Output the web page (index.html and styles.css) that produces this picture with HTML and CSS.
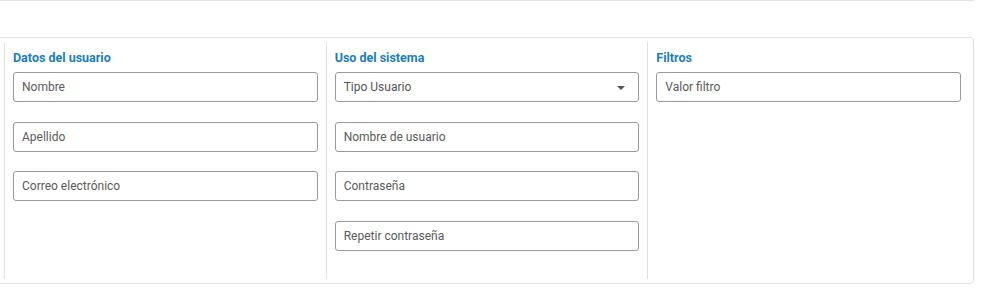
FILE: index.html
```html
<!DOCTYPE html>
<html lang="es">
<head>
    <meta charset="UTF-8">
    <meta name="viewport" content="width=device-width, initial-scale=1.0">
    <title>Usuario</title>
    <link rel="stylesheet" href="styles.css">
</head>
<body>
    <div class="top-rule"></div>

    <div class="card">
        <div class="column">
            <h3>Datos del usuario</h3>
            <input type="text" placeholder="Nombre">
            <input type="text" placeholder="Apellido">
            <input type="text" placeholder="Correo electrónico">
        </div>

        <div class="column">
            <h3>Uso del sistema</h3>
            <div class="select">
                <span>Tipo Usuario</span>
                <span class="caret"></span>
            </div>
            <input type="text" placeholder="Nombre de usuario">
            <input type="password" placeholder="Contraseña">
            <input type="password" placeholder="Repetir contraseña">
        </div>

        <div class="column">
            <h3>Filtros</h3>
            <input type="text" placeholder="Valor filtro">
        </div>
    </div>
</body>
</html>
```

FILE: styles.css
```css
body {
    margin: 0;
    font-family: Roboto, 'Liberation Sans', Arial, sans-serif;
    background-color: #ffffff;
    color: #555555;
}
.top-rule {
    width: 974px;
    border-top: 1px solid #e3e3e3;
    margin-bottom: 36px;
}
.card {
    display: flex;
    width: 965px;
    height: 237px;
    margin-left: -1px;
    padding: 4px;
    border: 1px solid #e0e0e0;
    border-radius: 0 4px 4px 0;
}
.column {
    flex: 1;
    padding: 0 8px;
    border-left: 1px solid #e0e0e0;
}
h3 {
    margin: 8px 0 6px 0;
    font-size: 12.5px;
    line-height: 16px;
    font-weight: bold;
    color: #1a7dc0;
}
input, .select {
    display: flex;
    align-items: center;
    box-sizing: border-box;
    width: 100%;
    height: 30px;
    margin: 0 0 19.6px 0;
    padding: 0 8px;
    border: 1px solid #9a9a9a;
    border-radius: 3px;
    font-family: Roboto, 'Liberation Sans', Arial, sans-serif;
    font-size: 12px;
    color: #555555;
    background-color: #ffffff;
}
input::placeholder {
    color: #5a5a5a;
    opacity: 1;
}
.select {
    justify-content: space-between;
    padding-right: 13px;
}
.caret {
    width: 0;
    height: 0;
    border-left: 4px solid transparent;
    border-right: 4px solid transparent;
    border-top: 4px solid #555555;
    margin-top: 2px;
}
```
